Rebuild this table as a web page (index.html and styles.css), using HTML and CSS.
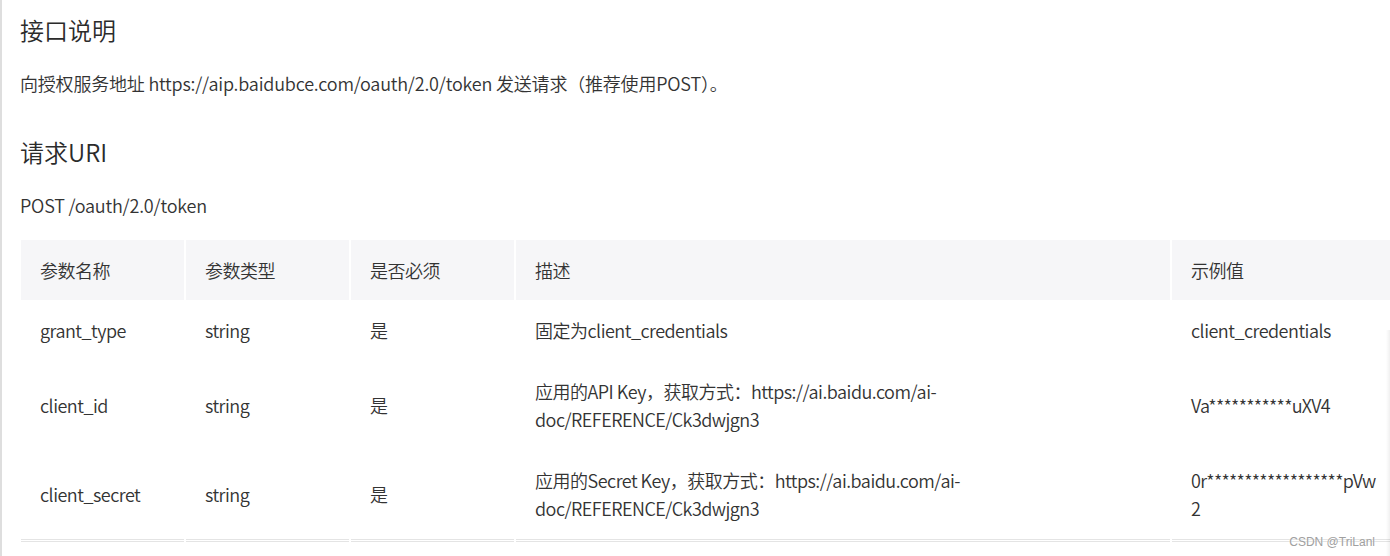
FILE: index.html
```html
<!DOCTYPE html>
<html lang="zh-CN">
<head>
<meta charset="utf-8">
<title>接口说明</title>
<link rel="stylesheet" href="styles.css">
</head>
<body>
<main class="doc">
  <h2 class="title">接口说明</h2>
  <p class="text">向授权服务地址 https://aip.baidubce.com/oauth/2.0/token 发送请求（推荐使用POST）。</p>
  <h2 class="title title-2">请求URI</h2>
  <p class="text text-post">POST /oauth/2.0/token</p>
  <div class="table-wrap">
    <table class="params">
      <colgroup>
        <col class="c-name"><col class="c-type"><col class="c-req"><col class="c-desc"><col class="c-ex">
      </colgroup>
      <thead>
        <tr><th>参数名称</th><th>参数类型</th><th>是否必须</th><th>描述</th><th>示例值</th></tr>
      </thead>
      <tbody>
        <tr class="row-1"><td>grant_type</td><td>string</td><td>是</td><td>固定为client_credentials</td><td>client_credentials</td></tr>
        <tr><td>client_id</td><td>string</td><td>是</td><td>应用的API Key，获取方式：https://ai.baidu.com/ai-doc/REFERENCE/Ck3dwjgn3</td><td class="ex">Va***********uXV4</td></tr>
        <tr class="last"><td>client_secret</td><td>string</td><td>是</td><td>应用的Secret Key，获取方式：https://ai.baidu.com/ai-doc/REFERENCE/Ck3dwjgn3</td><td class="ex">0r******************pVw2</td></tr>
      </tbody>
    </table>
  </div>
  <div class="scroll-shadow"></div>
  <div class="watermark">CSDN @TriLanl</div>
</main>
</body>
</html>
```
FILE: styles.css
```css
html, body {
  margin: 0;
  padding: 0;
  background: #fff;
  overflow: hidden;
}
body {
  font-family: "Noto Sans CJK SC", "Noto Sans", sans-serif;
  font-weight: 350;
  color: #333;
}
.doc {
  position: relative;
  height: 556px;
  border-left: 2px solid #dedede;
  padding-left: 18px;
  box-sizing: border-box;
  padding-top: 12px;
}
.title {
  margin: 0;
  font-size: 24px;
  font-weight: 350;
  line-height: 36px;
  color: #2b2b2b;
}
.title-2 {
  margin-top: 37px;
}
.text {
  margin: 21px 0 0;
  font-size: 18px;
  line-height: 28px;
  letter-spacing: -0.2px;
  color: #333;
}
.table-wrap {
  margin-top: 21px;
  margin-left: -1px;
  overflow: hidden;
}
.params {
  table-layout: fixed;
  width: 1383px;
  border-collapse: separate;
  border-spacing: 2px 0;
  font-size: 18px;
  line-height: 28px;
  letter-spacing: -0.5px;
  color: #333;
}
.c-name, .c-type, .c-req { width: 163px; }
.c-desc { width: 654px; }
.c-ex { width: 228px; }
.params th {
  background: #f6f6f8;
  font-weight: 350;
  text-align: left;
  padding: 16px 19px;
  color: #333;
}
.params td {
  padding: 16px 19px 17px;
  vertical-align: middle;
  text-align: left;
}
.params .ex {
  word-break: break-all;
  letter-spacing: -0.7px;
}
.params tr.last td {
  border-bottom: 3px double #e4e4e4;
}
.scroll-shadow {
  position: absolute;
  right: 0;
  top: 330px;
  bottom: 0;
  width: 4px;
  background: linear-gradient(to right, rgba(0,0,0,0), rgba(0,0,0,0.06));
}
.watermark {
  position: absolute;
  right: 15px;
  bottom: 7px;
  font-family: "Liberation Sans", Arial, sans-serif;
  font-size: 12px;
  font-weight: normal;
  letter-spacing: 0;
  color: #a0a0a0;
  text-shadow: 0 0 2px #fff;
}
```
